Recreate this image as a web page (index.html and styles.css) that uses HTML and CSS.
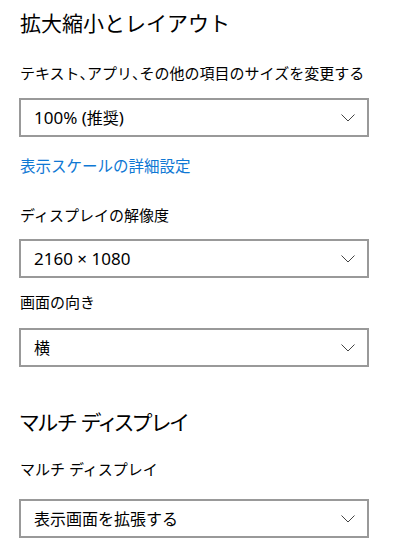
FILE: index.html
```html
<!DOCTYPE html>
<html lang="ja">
<head>
<meta charset="utf-8">
<title>拡大縮小とレイアウト</title>
<link rel="stylesheet" href="styles.css">
</head>
<body>
<main class="page">
  <h1 class="title">拡大縮小とレイアウト</h1>
  <div class="label label-first">テキスト<span class="punct">、</span>アプリ<span class="punct">、</span>その他の項目のサイズを変更する</div>
  <div class="combo combo-1">
    <span class="combo-text latin">100% (<span class="cjk">推奨</span>)</span>
    <svg class="chev" width="14" height="8" viewBox="0 0 14 8"><polyline points="0.5,0.5 7,7 13.5,0.5" fill="none" stroke="#444" stroke-width="1"/></svg>
  </div>
  <a class="link" href="#">表示スケールの詳細設定</a>
  <div class="label label-res">ディスプレイの解像度</div>
  <div class="combo combo-2">
    <span class="combo-text latin">2160 × 1080</span>
    <svg class="chev" width="14" height="8" viewBox="0 0 14 8"><polyline points="0.5,0.5 7,7 13.5,0.5" fill="none" stroke="#444" stroke-width="1"/></svg>
  </div>
  <div class="label label-orient">画面の向き</div>
  <div class="combo combo-3">
    <span class="combo-text">横</span>
    <svg class="chev" width="14" height="8" viewBox="0 0 14 8"><polyline points="0.5,0.5 7,7 13.5,0.5" fill="none" stroke="#444" stroke-width="1"/></svg>
  </div>
  <h2 class="title title-2">マルチ ディスプレイ</h2>
  <div class="label label-multi">マルチ ディスプレイ</div>
  <div class="combo combo-4">
    <span class="combo-text">表示画面を拡張する</span>
    <svg class="chev" width="14" height="8" viewBox="0 0 14 8"><polyline points="0.5,0.5 7,7 13.5,0.5" fill="none" stroke="#444" stroke-width="1"/></svg>
  </div>
</main>
</body>
</html>
```
FILE: styles.css
```css
html, body {
  margin: 0;
  padding: 0;
  background: #ffffff;
}
body {
  font-family: "Noto Sans", "Noto Sans CJK JP", sans-serif;
  color: #000000;
}
.page {
  display: flex;
  flex-direction: column;
  align-items: flex-start;
  padding: 8px 20px 0 20px;
}
.title {
  margin: 0;
  font-size: 21px;
  line-height: 30px;
  font-weight: 400;
  height: 30px;
  white-space: nowrap;
}
.title-2 {
  margin-top: 40px;
  font-feature-settings: "palt";
  letter-spacing: -0.5px;
}
.label {
  font-size: 15px;
  line-height: 20px;
  height: 20px;
  white-space: nowrap;
}
.punct {
  font-feature-settings: "halt";
}
.label-first { margin-top: 25px; }
.label-res { margin-top: 29px; }
.label-orient { margin-top: 14px; }
.label-multi { margin-top: 22px; }
.combo {
  box-sizing: border-box;
  width: 350px;
  height: 39px;
  margin-left: -1px;
  border: 2px solid #999999;
  display: flex;
  align-items: center;
  justify-content: space-between;
  padding: 0 12px 0 13px;
  font-size: 16px;
}
.combo-1 { margin-top: 15px; }
.combo-2 { margin-top: 14px; }
.combo-3 { margin-top: 16px; }
.combo-4 { margin-top: 20px; }
.combo-text {
  line-height: 22px;
}
.combo-text.latin {
  font-size: 17px;
}
.combo-text .cjk {
  font-size: 16px;
}
.chev {
  display: block;
  margin-top: 1px;
}
.link {
  margin-top: 19px;
  font-size: 15.5px;
  line-height: 20px;
  color: #0f78d4;
  text-decoration: none;
}
```
